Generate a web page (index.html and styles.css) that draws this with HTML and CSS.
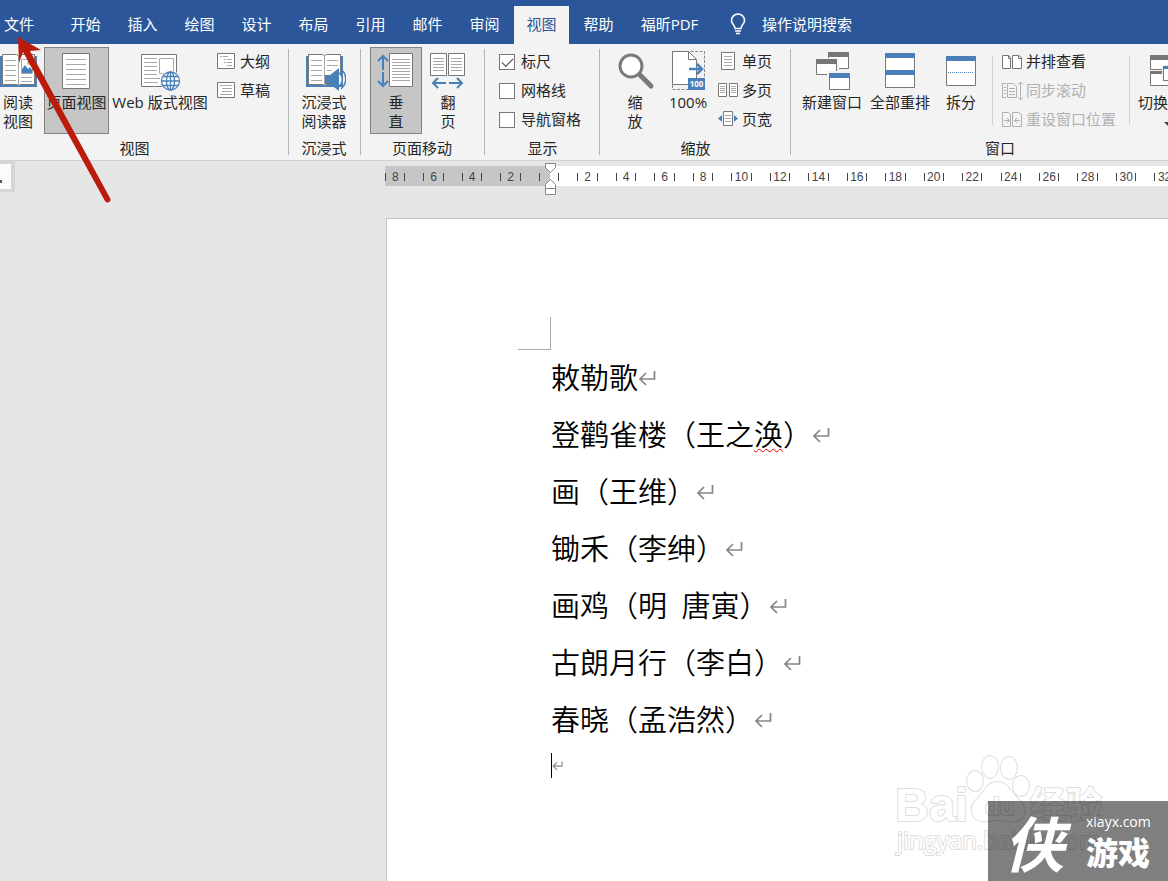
FILE: index.html
```html
<!DOCTYPE html>
<html lang="zh-CN">
<head>
<meta charset="utf-8">
<title>文档编辑</title>
<link rel="stylesheet" href="styles.css">
</head>
<body>
<svg class="defs" aria-hidden="true">
  <symbol id="book" viewBox="0 0 44 46">
    <path class="blue-fill" d="M4 9h37v31H4z"/>
    <path class="sheet" d="M6.500 7.500h14l2 1.500 2-1.500h14v30h-14l-2 1-2-1h-14z"/>
    <path class="rule" d="M22.500 9v29M9 13.500h11M9 18.500h11M9 23.500h11M9 28.500h11M9 33.500h11"/>
  </symbol>
  <symbol id="return" viewBox="0 0 18 18">
    <path d="M16.500 2v8H2M8 4L2 10l6 6" fill="none" stroke="#858585" stroke-width="1.700"/>
  </symbol>
</svg>

<header class="tabs">
  <nav class="tab-list">
    <button class="tab tab-file">文件</button>
    <button class="tab">开始</button>
    <button class="tab">插入</button>
    <button class="tab">绘图</button>
    <button class="tab">设计</button>
    <button class="tab">布局</button>
    <button class="tab">引用</button>
    <button class="tab">邮件</button>
    <button class="tab">审阅</button>
    <button class="tab tab-active">视图</button>
    <button class="tab">帮助</button>
    <button class="tab tab-wide">福昕PDF</button>
  </nav>
  <button class="tell-me">
    <svg width="18" height="22" viewBox="0 0 18 22" fill="none" stroke="#fff" stroke-width="1.500"><path d="M6 15.500C6 12 2.500 11 2.500 7.500a6.500 6.500 0 0 1 13 0C15.500 11 12 12 12 15.500zM6 18h6M7 20.500h4"/></svg>
    操作说明搜索
  </button>
</header>

<section class="ribbon">
  <div class="group group-views">
    <div class="group-body">
      <button class="big big-read">
        <svg class="icon" viewBox="0 0 44 46"><use href="#book"/><path fill="#fff" d="M25 10h12v17H25z"/><path class="rule" d="M25.500 12.500h11v14h-11zM25 30.500h11M25 34.500h11"/><path class="blue-fill" d="M26 26v-4l3-4 3 4 2-2 2 3v3z"/><circle cx="33" cy="16" r="2" fill="#e8a860"/></svg>
        <span>阅读<br>视图</span>
      </button>
      <button class="big big-page pressed">
        <svg class="icon" viewBox="0 0 44 46"><path class="sheet" d="M7.500 6.500h27v35h-27z"/><path class="rule" d="M11 12.500h20M11 17.500h20M11 22.500h20M11 27.500h20M11 32.500h20M11 37.500h20"/></svg>
        <span>页面视图</span>
      </button>
      <button class="big big-web">
        <svg class="icon" viewBox="0 0 44 46"><path class="sheet" d="M3.500 7.500h35v32h-35z"/><path class="rule" d="M6 11.500h13M6 15.500h13M6 19.500h13M6 23.500h13M6 27.500h13M6 31.500h16M6 35.500h14M21.500 11.500h14v15h-14z"/><circle cx="32.500" cy="34" r="10.500" fill="#f3f3f3"/><g fill="#fff" stroke="#4a80b8" stroke-width="1.300"><circle cx="32.500" cy="34" r="9"/><ellipse cx="32.500" cy="34" rx="4" ry="9"/><path d="M23.500 34h18M25 29.500h15M25 38.500h15M32.500 25v18"/></g></svg>
        <span>Web 版式视图</span>
      </button>
      <div class="small-column">
        <button class="small"><svg class="mini" viewBox="0 0 22 20"><path class="sheet" d="M1.500 1.500h17v15h-17z"/><path class="rule" d="M4 4.500h2M7 4.500h5M8 7.500h2M11 7.500h5M8 10.500h2M11 10.500h5M11 13.500h5"/></svg>大纲</button>
        <button class="small"><svg class="mini" viewBox="0 0 22 20"><path class="sheet" d="M1.500 1.500h17v15h-17z"/><path class="rule" d="M4 4.500h12M6 7.500h10M6 10.500h10M4 13.500h12"/></svg>草稿</button>
      </div>
    </div>
    <div class="group-name">视图</div>
  </div>

  <div class="group group-immersive">
    <div class="group-body">
      <button class="big">
        <svg class="icon" viewBox="0 0 44 46"><use href="#book"/><path class="rule" d="M25 13.500h11M25 18.500h11M25 23.500h5"/><path d="M23 28h5l9-7v23l-9-7h-5z" fill="#4a80b8"/><path d="M37 26a8 8 0 0 1 0 13" fill="#f3f3f3" stroke="#4a80b8" stroke-width="1.500"/><path d="M39 22a13 13 0 0 1 0 20" fill="none" stroke="#4a80b8" stroke-width="1.500"/></svg>
        <span>沉浸式<br>阅读器</span>
      </button>
    </div>
    <div class="group-name">沉浸式</div>
  </div>

  <div class="group group-move">
    <div class="group-body">
      <button class="big big-move pressed">
        <svg class="icon" viewBox="0 0 44 46"><path class="sheet" d="M15.500 6.500h23v33h-23z"/><path class="rule" d="M18 12.500h18M18 15.500h18M18 18.500h18M18 21.500h18M18 24.500h18M18 27.500h18M18 30.500h18M18 33.500h18"/><path class="blue-line" d="M9 23V9M4 14l5-5 5 5M9 25v14M4 34l5 5 5-5"/></svg>
        <span>垂<br>直</span>
      </button>
      <button class="big big-move">
        <svg class="icon" viewBox="0 0 44 46"><path class="sheet" d="M4.500 6.500h16v22h-16zM22.500 6.500h16v22h-16z"/><path class="rule" d="M7 11.500h11M7 14.500h11M7 17.500h11M7 20.500h11M7 23.500h11M25 11.500h11M25 14.500h11M25 17.500h11M25 20.500h11M25 23.500h11"/><path class="blue-line" d="M20 36H7M12 31l-5 5 5 5M23 36h13M31 31l5 5-5 5"/></svg>
        <span>翻<br>页</span>
      </button>
    </div>
    <div class="group-name">页面移动</div>
  </div>

  <div class="group group-show">
    <div class="group-body">
      <div class="small-column">
        <label class="check"><input type="checkbox" checked>标尺</label>
        <label class="check"><input type="checkbox">网格线</label>
        <label class="check"><input type="checkbox">导航窗格</label>
      </div>
    </div>
    <div class="group-name">显示</div>
  </div>

  <div class="group group-zoom">
    <div class="group-body">
      <button class="big big-zoom">
        <svg class="icon" viewBox="0 0 44 46"><path d="M26 27l12 12" stroke="#7a7a7a" stroke-width="5" stroke-linecap="round"/><circle cx="18" cy="19" r="11" fill="#fff" stroke="#7a7a7a" stroke-width="3"/></svg>
        <span>缩<br>放</span>
      </button>
      <button class="big big-percent">
        <svg class="icon" viewBox="0 0 44 46"><path d="M6.500 4.500h32v38h-32z" fill="none" stroke="#888" stroke-dasharray="3 1.500"/><path class="sheet" d="M6.500 4.500h16l8 8v25h-24z"/><path d="M22.500 4.500v8h8" fill="none" stroke="#777"/><path d="M23 22h13M31 17l5 5-5 5" fill="none" stroke="#4a80b8" stroke-width="2.500"/><path class="blue-fill" d="M22 31h17v12H22z"/><text x="30.500" y="40" class="icon-text">100</text></svg>
        <span>100%</span>
      </button>
      <div class="small-column">
        <button class="small"><svg class="mini" viewBox="0 0 22 20"><path class="sheet" d="M3.500.5h13v17h-13z"/><path class="rule" d="M6 4.500h8M6 7.500h8M6 10.500h8M6 13.500h8"/></svg>单页</button>
        <button class="small"><svg class="mini" viewBox="0 0 22 20"><path class="sheet" d="M.5 2.500h8v13h-8zM11.500 2.500h8v13h-8z"/><path class="rule" d="M2 5.500h5M2 7.500h5M2 9.500h5M2 11.500h5M13 5.500h5M13 7.500h5M13 9.500h5M13 11.500h5"/></svg>多页</button>
        <button class="small"><svg class="mini" viewBox="0 0 22 20"><path class="sheet" d="M5.500 1.500h9v14h-9z"/><path class="rule" d="M7 5.500h6M7 8.500h6M7 11.500h6"/><path class="blue-fill" d="M0 8.500L4 5v7zM20 8.500L16 5v7z"/></svg>页宽</button>
      </div>
    </div>
    <div class="group-name">缩放</div>
  </div>

  <div class="group group-window">
    <div class="group-body">
      <button class="big big-window">
        <svg class="icon" viewBox="0 0 44 46"><path class="sheet" d="M18.500 5.500h20v16h-20z"/><path fill="#777" d="M18 5h21v5H18z"/><path fill="#f3f3f3" d="M5 11h24v19H5z"/><path class="sheet" d="M6.500 12.500h20v15h-20z"/><path fill="#777" d="M6 12h21v5H6z"/><path fill="#f3f3f3" d="M17 24h24v19H17z"/><path class="sheet" d="M19.500 26.500h20v16h-20z"/><path class="blue-fill" d="M19 26h21v5H19z"/></svg>
        <span>新建窗口</span>
      </button>
      <button class="big big-window">
        <svg class="icon" viewBox="0 0 44 46"><path class="sheet" d="M7.500 6.500h29v34h-29z"/><path class="blue-fill" d="M7 6h30v5H7zM7 23h30v5H7z"/></svg>
        <span>全部重排</span>
      </button>
      <button class="big big-split">
        <svg class="icon" viewBox="0 0 44 46"><path class="sheet" d="M7.500 9.500h29v29h-29z"/><path class="blue-fill" d="M7 9h30v5H7z"/><path d="M9 25.500h26" stroke="#4a80b8" stroke-dasharray="1 1"/></svg>
        <span>拆分</span>
      </button>
      <div class="small-column window-column">
        <button class="small"><svg class="mini" viewBox="0 0 22 20"><path class="sheet" d="M.5 3.500h6l2 2v11h-8zM10.500 3.500h6l3 2v11h-9z"/><path d="M6.500 3.500v3h2M16.500 3.500v3h3" fill="none" stroke="#777"/></svg>并排查看</button>
        <button class="small" disabled><svg class="mini" viewBox="0 0 22 20" fill="none" stroke="#b0aeb0"><path d="M4 2.500H.5v14H4M5.500 2.500h6l3 3v11h-9zM2 6.500h2M2 9.500h2M2 12.500h2M7 7.500h6M7 10.500h6M7 13.500h6M18.500 1v18M16 3.500L18.500 1 21 3.500M16 16.500l2.500 2.500 2.500-2.500"/></svg>同步滚动</button>
        <button class="small" disabled><svg class="mini" viewBox="0 0 22 20" fill="none" stroke="#b0aeb0"><path d="M.5 2.500h6l2 2v12h-8zM10.500 2.500h6l3 2v12h-9zM2 10.500h5M5 8l2.500 2.500L5 13M18 10.500h-5M15 8l-2.500 2.500L15 13"/></svg>重设窗口位置</button>
      </div>
      <button class="big big-switch">
        <svg class="icon" viewBox="0 0 44 46"><path class="sheet" d="M4.500 8.500h18v14h-18zM4.500 24.500h18v14h-18z"/><path fill="#777" d="M4 8h19v5H4zM4 24h19v3H4z"/><path fill="#f3f3f3" d="M16 18h24v17H16z"/><path class="sheet" d="M17.500 19.500h21v14h-21z"/><path class="blue-fill" d="M17 19h22v3H17z"/></svg>
        <span>切换窗口<br><svg width="8" height="5" viewBox="0 0 8 5"><path d="M0 0h8L4 4z" fill="#444"/></svg></span>
      </button>
    </div>
    <div class="group-name">窗口</div>
  </div>
</section>

<main class="workspace">
  <div class="ruler-row">
    <button class="tab-stop" aria-label="制表符"></button>
    <div class="ruler">
      <div class="ruler-strip">
        <span class="cell">8</span><span class="cell">6</span><span class="cell">4</span><span class="cell">2</span><span class="cell"></span><span class="cell">2</span><span class="cell">4</span><span class="cell">6</span><span class="cell">8</span><span class="cell">10</span><span class="cell">12</span><span class="cell">14</span><span class="cell">16</span><span class="cell">18</span><span class="cell">20</span><span class="cell">22</span><span class="cell">24</span><span class="cell">26</span><span class="cell">28</span><span class="cell">30</span><span class="cell">32</span>
      </div>
    </div>
    <svg class="indent" width="12" height="32" viewBox="0 0 12 32" fill="#fff" stroke="#858585"><path d="M.5.5h10v4l-5 5-5-5zM.5 31.500v-10l5-5 5 5v10zM.5 25.500h10"/></svg>
  </div>
  <article class="page">
    <div class="crop-mark"></div>
    <p class="line">敕勒歌<svg class="mark"><use href="#return"/></svg></p>
    <p class="line">登鹳雀楼（王之<span class="misspelt">涣</span>）<svg class="mark"><use href="#return"/></svg></p>
    <p class="line">画（王维）<svg class="mark"><use href="#return"/></svg></p>
    <p class="line">锄禾（李绅）<svg class="mark"><use href="#return"/></svg></p>
    <p class="line">画鸡（明<span class="spaced"> 唐寅</span>）<svg class="mark"><use href="#return"/></svg></p>
    <p class="line">古朗月行（李白）<svg class="mark"><use href="#return"/></svg></p>
    <p class="line">春晓（孟浩然）<svg class="mark"><use href="#return"/></svg></p>
    <p class="caret-line"><svg class="mark-small" viewBox="0 0 18 18"><use href="#return"/></svg></p>
  </article>
</main>

<svg class="arrow" width="120" height="210" viewBox="0 0 120 210"><path d="M18 37l23 13-11 1 80 147a2.500 2.500 0 0 1-5 3L23 52l-4 11z" fill="#bb1b0b"/></svg>

<svg class="watermark" width="288" height="141" viewBox="0 0 288 141">
  <g class="outline">
    <text x="15" y="81" class="wm-latin">Bai</text>
    <ellipse cx="95" cy="41" rx="8" ry="10"/><ellipse cx="110" cy="27" rx="8" ry="11"/><ellipse cx="129" cy="28" rx="8" ry="11"/><ellipse cx="141" cy="46" rx="8" ry="10"/>
    <path d="M117 42c-11 0-13 12-21 18-7 6-5 20 5 21 7 1 10-1 16-1s11 2 18 1c10-1 12-13 5-20-8-7-12-19-23-19z"/>
    <text x="105" y="75" class="wm-du">du</text>
    <text x="150" y="78" class="wm-cjk">经验</text>
    <text x="17" y="109" class="wm-url">jingyan.baidu.com</text>
  </g>
</svg>
<aside class="badge">
  <span class="badge-mark">侠</span>
  <span class="badge-text"><span class="badge-url">xiayx.com</span><span class="badge-name">游戏</span></span>
</aside>
</body>
</html>
```
FILE: styles.css
```css
* { box-sizing: border-box; }
body {
  margin: 0;
  min-height: 100vh;
  display: flex;
  flex-direction: column;
  position: relative;
  overflow: hidden;
  background: #e6e6e6;
  color: #262626;
  font: 15px/19px "Open Sans", "Noto Sans CJK SC", sans-serif;
}
button {
  margin: 0;
  padding: 0;
  border: 0;
  background: none;
  color: inherit;
  font: inherit;
  white-space: nowrap;
}
.defs { position: absolute; width: 0; height: 0; }
.sheet { fill: #fff; stroke: #777; }
.rule { fill: none; stroke: #a8a8a8; }
.blue-fill { fill: #4a80b8; }
.blue-line { fill: none; stroke: #4a80b8; stroke-width: 2; }
.icon-text { font: bold 8px "Open Sans", sans-serif; fill: #fff; text-anchor: middle; }

/* Tab bar */
.tabs { display: flex; height: 44px; padding-top: 6px; background: #2b579a; color: #fff; }
.tab-list { display: flex; gap: 2px; }
.tab { width: 55px; height: 38px; padding-bottom: 2px; }
.tab-file { width: 56px; padding-right: 18px; }
.tab-wide { width: 83px; }
.tab-active { background: #f3f3f3; color: #2b579a; }
.tell-me { display: flex; align-items: center; gap: 15px; margin-left: 18px; padding-bottom: 2px; }

/* Ribbon */
.ribbon { display: flex; overflow: hidden; background: #f3f3f3; border-bottom: 1px solid #d0d0d0; }
.group { position: relative; flex: none; padding: 3px 0 2px; }
.group::after {
  content: "";
  position: absolute;
  top: 5px;
  right: 0;
  bottom: 5px;
  width: 1px;
  background: #b4b4b4;
}
.group-body { display: flex; height: 87px; }
.group-name { margin-top: 5px; line-height: 19px; text-align: center; }
.group-views { width: 289px; }
.group-views .group-name { padding-right: 20px; }
.group-immersive { width: 72px; }
.group-immersive, .group-move { padding-right: 2px; }
.group-immersive .group-body, .group-move .group-body { justify-content: center; }
.group-move { width: 124px; }
.group-show { width: 115px; }
.group-show .group-body { padding-left: 14px; }
.group-zoom { width: 191px; }
.group-zoom .group-body { padding-left: 10px; }
.group-window { width: 418px; }
.group-window .group-body { padding-left: 7px; }

.big { display: flex; flex-direction: column; align-items: center; flex: none; height: 87px; }
.icon { display: block; width: 44px; height: 46px; flex: none; }
.pressed { background: #c6c6c6; box-shadow: inset 0 0 0 1px #828282; }
.big-read { width: 36px; margin-right: 8px; }
.big-page { width: 65px; }
.big-web { width: 102px; }
.big-move { width: 52px; }
.big-zoom { width: 50px; }
.big-percent { width: 56px; }
.big-window { width: 68px; }
.big-split { width: 54px; }
.big-switch { width: 76px; }

.small-column { display: flex; flex-direction: column; padding-left: 5px; }
.group-show .small-column { padding-left: 0; }
.group-zoom .small-column { padding-left: 2px; }
.small, .check { display: flex; align-items: center; height: 29px; white-space: nowrap; }
.small { gap: 2px; }
.small:disabled { color: #b1b1b1; }
.mini { width: 22px; height: 20px; flex: none; }
.check { gap: 6px; }
.check input {
  appearance: none;
  width: 16px;
  height: 16px;
  margin: 0;
  border: 1px solid #777;
  background: #fff;
}
.check input:checked::after {
  content: "";
  display: block;
  width: 10px;
  height: 5px;
  margin: 3px 2px;
  border: solid #444;
  border-width: 0 0 1px 1px;
  rotate: -45deg;
}
.group-window .window-column { position: relative; padding: 0 14px; }
.window-column::before, .window-column::after {
  content: "";
  position: absolute;
  top: 9px;
  bottom: 9px;
  left: 4px;
  width: 1px;
  background: #d0d0d0;
}
.window-column::after { left: auto; right: 0; }

/* Ruler and document */
.workspace { flex: 1; display: flex; flex-direction: column; }
.ruler-row { position: relative; display: flex; padding-top: 5px; height: 25px; }
.tab-stop {
  position: absolute;
  left: 0;
  top: 0;
  width: 15px;
  height: 31px;
  border: solid #d6d6d6;
  border-width: 3px 4px 3px 0;
  background: #fbfbfb;
}
.tab-stop::after { content: ""; position: absolute; left: 0; bottom: 6px; width: 2px; height: 3px; background: #555; }
.ruler {
  flex: 1;
  margin-left: 385px;
  overflow: hidden;
  background: linear-gradient(to right, #c6c6c6 165px, #fff 165px);
}
.ruler-strip { display: flex; align-items: center; width: 808px; height: 22px; margin-left: -9px; }
.cell {
  flex: 1;
  display: flex;
  justify-content: space-between;
  align-items: center;
  padding: 0 9px;
  height: 20px;
  color: #444;
  font: 12px/20px "Liberation Sans", sans-serif;
}
.cell::before, .cell::after { content: ""; width: 1px; height: 8px; background: #444; }
.indent { position: absolute; left: 545px; top: 2px; }
.page {
  flex: 1;
  margin: 32px 0 0 386px;
  padding: 98px 0 0 164px;
  background: #fff;
  border: solid #c3c3c3;
  border-width: 1px 0 0 1px;
  color: #000;
}
.crop-mark { width: 33px; height: 33px; margin: 0 0 -2px -33px; border: solid #aaa; border-width: 0 1px 1px 0; }
.line { margin: 0; height: 57px; font: 350 29px/57px "Noto Sans CJK SC DemiLight", "Noto Sans CJK SC", sans-serif; white-space: nowrap; }
.mark { width: 18px; height: 18px; vertical-align: 2px; }
.spaced { margin-left: 8px; }
.misspelt { text-decoration: underline wavy #e00 1px; text-underline-offset: 2px; }
.caret-line { display: flex; align-items: center; width: 12px; height: 25px; margin: 6px 0 0; border-left: 1px solid #000; }
.mark-small { width: 11px; height: 13px; }

/* Overlays */
.arrow { position: absolute; left: 0; top: 0; }
.watermark { position: absolute; right: 0; bottom: 0; }
.outline { fill: #fff; stroke: #dedede; stroke-width: 2; paint-order: stroke; }
.wm-latin { font: bold 47px "Liberation Sans", sans-serif; }
.wm-du { font: bold 24px "Liberation Sans", sans-serif; }
.wm-cjk { font: bold 36px "Noto Sans CJK SC", sans-serif; }
.wm-url { font: 24px "Open Sans", sans-serif; }
.badge {
  position: absolute;
  right: 0;
  bottom: 0;
  display: flex;
  align-items: center;
  gap: 22px;
  width: 180px;
  height: 80px;
  padding-left: 16px;
  background: rgba(0, 0, 0, 0.5);
  color: #fff;
}
.badge-mark { font: italic 700 60px/80px "Noto Sans CJK SC", sans-serif; }
.badge-text { display: flex; flex-direction: column; gap: 4px; padding-bottom: 4px; }
.badge-url { font-size: 14px; }
.badge-name { font: 900 32px/32px "Noto Sans CJK SC", sans-serif; }
```
